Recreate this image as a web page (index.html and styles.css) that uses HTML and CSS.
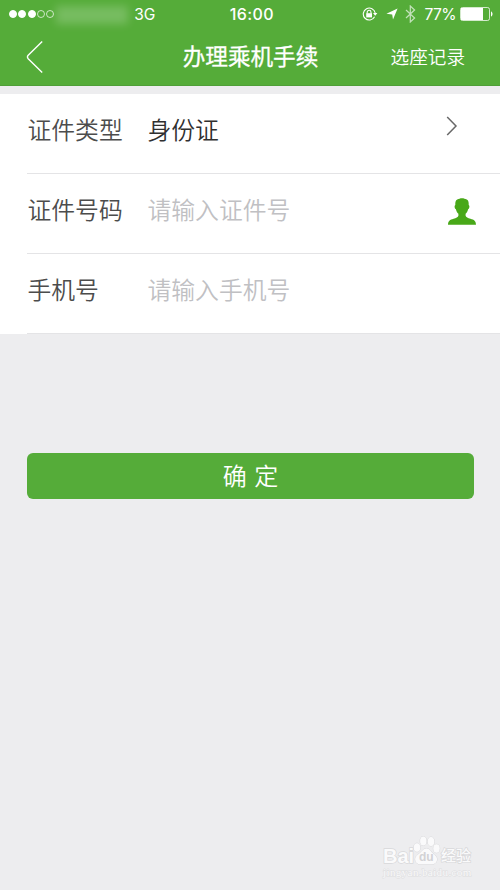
FILE: index.html
```html
<!DOCTYPE html>
<html lang="zh-CN">
<head>
  <meta charset="UTF-8" />
  <meta name="viewport" content="width=device-width, initial-scale=1.0" />
  <title>办理乘机手续</title>
  <link rel="stylesheet" href="styles.css">
</head>
<body>
  <header>
    <div class="status">
      <div class="signal">
        <i class="full"></i><i class="full"></i><i class="full"></i><i></i><i></i>
      </div>
      <span class="carrier"></span>
      <span class="network">3G</span>
      <span class="time">16:00</span>
      <div class="status-right">
        <svg class="lock" width="16" height="14" viewBox="0 0 16 14" fill="none" stroke="#fff">
          <path d="M12.6 9.8A6 6 0 1 1 13.2 6" stroke-width="1.1" />
          <path d="M11 6h4.400l-2.200 2.800z" fill="#fff" stroke="none" />
          <path d="M5.200 6.600V5.200a1.900 1.900 0 0 1 3.800 0v1.400" stroke-width="1.1" />
          <path d="M4.200 6.200h5.800v4.200H4.200z" fill="#fff" stroke="none" />
        </svg>
        <svg class="arrow" width="12" height="12" viewBox="0 0 12 12" fill="#fff">
          <path d="M11.600.5 7 11.600 6.200 6.400.4 5.800z" />
        </svg>
        <svg class="bluetooth" width="11" height="18" viewBox="0 0 11 18" fill="none" stroke="#fff" stroke-width="1.2">
          <path d="M1 5l8.600 8-4.300 4V1l4.300 4L1 13" />
        </svg>
        <span class="percent">77%</span>
        <svg class="battery" width="33" height="14" viewBox="0 0 33 14">
          <rect x=".5" y=".5" width="29" height="13" rx="2" fill="none" stroke="#fff" stroke-opacity=".75" />
          <path d="M1 1h22v12H1z" fill="#fff" />
          <path d="M31 4.500c2 .6 2 4.400 0 5z" fill="#fff" />
        </svg>
      </div>
    </div>
    <nav>
      <a class="back" href="#">
        <svg width="18" height="34" viewBox="0 0 18 34" fill="none" stroke="#fff" stroke-width="1.4">
          <path d="M16.200 1.500 2.200 15.300q-1.500 1.700 0 3.400L16.200 32.500" />
        </svg>
      </a>
      <h1>办理乘机手续</h1>
      <a class="records" href="#">选座记录</a>
    </nav>
  </header>

  <form>
    <div class="row">
      <label>证件类型</label>
      <span class="value">身份证</span>
      <svg class="chevron" width="12" height="20" viewBox="0 0 12 20" fill="none" stroke="#686868" stroke-width="1.5">
        <path d="M1.200 1 10 10 1.200 19" />
      </svg>
    </div>
    <div class="row">
      <label>证件号码</label>
      <span class="value placeholder">请输入证件号</span>
      <svg class="person" width="28" height="27" viewBox="0 0 28 27" fill="#48a818">
        <path d="M14 .3c2 0 3 .7 4.800 1.200 1.600.8 2 2.600 1.900 5.500 1.200.5.900 3.600-.6 4.300-.5 2.300-1.400 3.500-2.500 4.500v2c.4 1.600 2.300 2.200 4.800 2.900 3.800 1 5.500 2 5.600 6.100H0c.1-4.100 1.800-5.100 5.600-6.100 2.500-.7 4.400-1.300 4.800-2.900v-2c-1.100-1-2-2.200-2.500-4.500-1.500-.7-1.800-3.800-.6-4.300-.1-2.900.3-4.700 1.900-5.500C11 1 12 .3 14 .3z" />
      </svg>
    </div>
    <div class="row">
      <label>手机号</label>
      <span class="value placeholder">请输入手机号</span>
    </div>
    <button type="button">确 定</button>
  </form>

  <div class="watermark">
    <div class="brand">
      <span class="bai">Bai</span>
      <span class="paw">
        <svg width="28" height="29" viewBox="0 0 28 29" fill="#fafafb" stroke="#d6d6d8" stroke-width=".9">
          <ellipse cx="4" cy="11.500" rx="3.200" ry="4.300" />
          <ellipse cx="10.300" cy="5" rx="3.200" ry="4.500" />
          <ellipse cx="18" cy="5.500" rx="3.200" ry="4.500" />
          <ellipse cx="23.500" cy="12.500" rx="3.200" ry="4.200" />
          <path d="M13.500 12.500c3 0 4.200 3 6.500 5s4.500 3.500 4 6.500c-.4 3.200-3 4.400-6 4.200H8c-3.500.2-5.600-1.500-5.800-4.500-.2-3 2.300-4.700 4.500-6.500s3.600-4.700 6.800-4.700z" />
        </svg>
        <b>du</b>
      </span>
      <span class="jingyan">经验</span>
    </div>
    <div class="url">jingyan.baidu.com</div>
  </div>
</body>
</html>
```
FILE: styles.css
```css
* {
  box-sizing: border-box;
}
body {
  margin: 0;
  height: 890px;
  position: relative;
  overflow: hidden;
  background: #ededef;
  font-family: Inter, 'Noto Sans CJK SC', sans-serif;
  color: #333;
}
svg {
  display: block;
}
a {
  color: #fff;
  text-decoration: none;
}
header {
  height: 86px;
  background: #55ac39;
  border-bottom: 1px solid #4f9f38;
  color: #fff;
}
.status {
  height: 28px;
  padding: 0 7px 0 9px;
  display: flex;
  align-items: center;
  font-size: 16px;
}
.signal {
  display: flex;
  gap: 1.3px;
}
.signal i {
  width: 8px;
  height: 8px;
  border: 1px solid rgba(255,255,255,0.7);
  border-radius: 50%;
}
.signal .full {
  background: #fff;
  border-color: #fff;
}
.carrier {
  width: 72px;
  height: 18px;
  margin: 2px 0 0 2px;
  background: rgba(255,255,255,0.2);
  filter: blur(4px);
}
.network {
  width: 24px;
  margin-left: 6px;
  font-size: 15.5px;
}
.time {
  margin-left: 71.5px;
  font-size: 16px;
  font-weight: 500;
  letter-spacing: 0.4px;
}
.status-right {
  margin-left: auto;
  display: flex;
  align-items: center;
}
.arrow {
  margin-left: 8px;
}
.bluetooth {
  margin-left: 7px;
  opacity: 0.65;
}
.percent {
  margin: 0 4px 0 9px;
  font-size: 15.6px;
  letter-spacing: -0.6px;
}
nav {
  height: 57px;
  padding: 0 35px 0 26px;
  display: grid;
  grid-template-columns: 100px 1fr 100px;
  align-items: center;
}
h1 {
  margin: 0;
  font-size: 22.6px;
  font-weight: 400;
  -webkit-text-stroke: 0.3px #fff;
  line-height: 30px;
  text-align: center;
  padding-left: 10px;
}
.records {
  font-size: 18.6px;
  font-weight: 350;
  line-height: 28px;
  text-align: right;
}
form {
  margin-top: 8px;
}
.row {
  height: 80px;
  padding: 0 24px 6px 27.5px;
  display: flex;
  align-items: center;
  font-size: 23.8px;
  font-weight: 350;
  line-height: 34px;
  /* divider starts at the label, not at the screen edge */
  background: linear-gradient(#e4e4e6, #e4e4e6) 27px 79px / 100% 1px no-repeat #fff;
}
label {
  width: 120px;
  color: #4c4c4c;
}
.value {
  flex: 1;
  color: #303030;
}
.placeholder {
  color: #c0c0c3;
}
.chevron {
  margin: 0 18px 10px 0;
}
.person {
  margin-top: 1px;
}
button {
  display: block;
  width: 447px;
  height: 46px;
  margin: 119px 0 0 27px;
  padding: 0 0 3px;
  border: none;
  border-radius: 6px;
  background: #55ac39;
  color: #fff;
  font-family: inherit;
  font-size: 24px;
  font-weight: 350;
  word-spacing: 1px;
}
.watermark {
  position: absolute;
  left: 383px;
  top: 836px;
  width: 90px;
  color: #fafafb;
  -webkit-text-stroke: 1.4px #d8d8da;
  paint-order: stroke fill;
}
.brand {
  display: flex;
  align-items: flex-end;
  height: 29px;
}
.bai {
  width: 30px;
  font: bold 20px/18px 'Liberation Sans', sans-serif;
}
.paw {
  position: relative;
  width: 28px;
}
.paw b {
  position: absolute;
  left: 6px;
  top: 14px;
  font: bold 12px/14px 'Liberation Sans', sans-serif;
  color: #d2d2d5;
  -webkit-text-stroke: 0;
}
.jingyan {
  font-size: 15px;
  font-weight: 500;
  line-height: 18px;
  white-space: nowrap;
}
.url {
  margin-top: 1px;
  font: 11px/13px 'Liberation Serif', serif;
  letter-spacing: 0.4px;
  color: #f9f9fa;
  -webkit-text-stroke: 1px #dededf;
}
```
